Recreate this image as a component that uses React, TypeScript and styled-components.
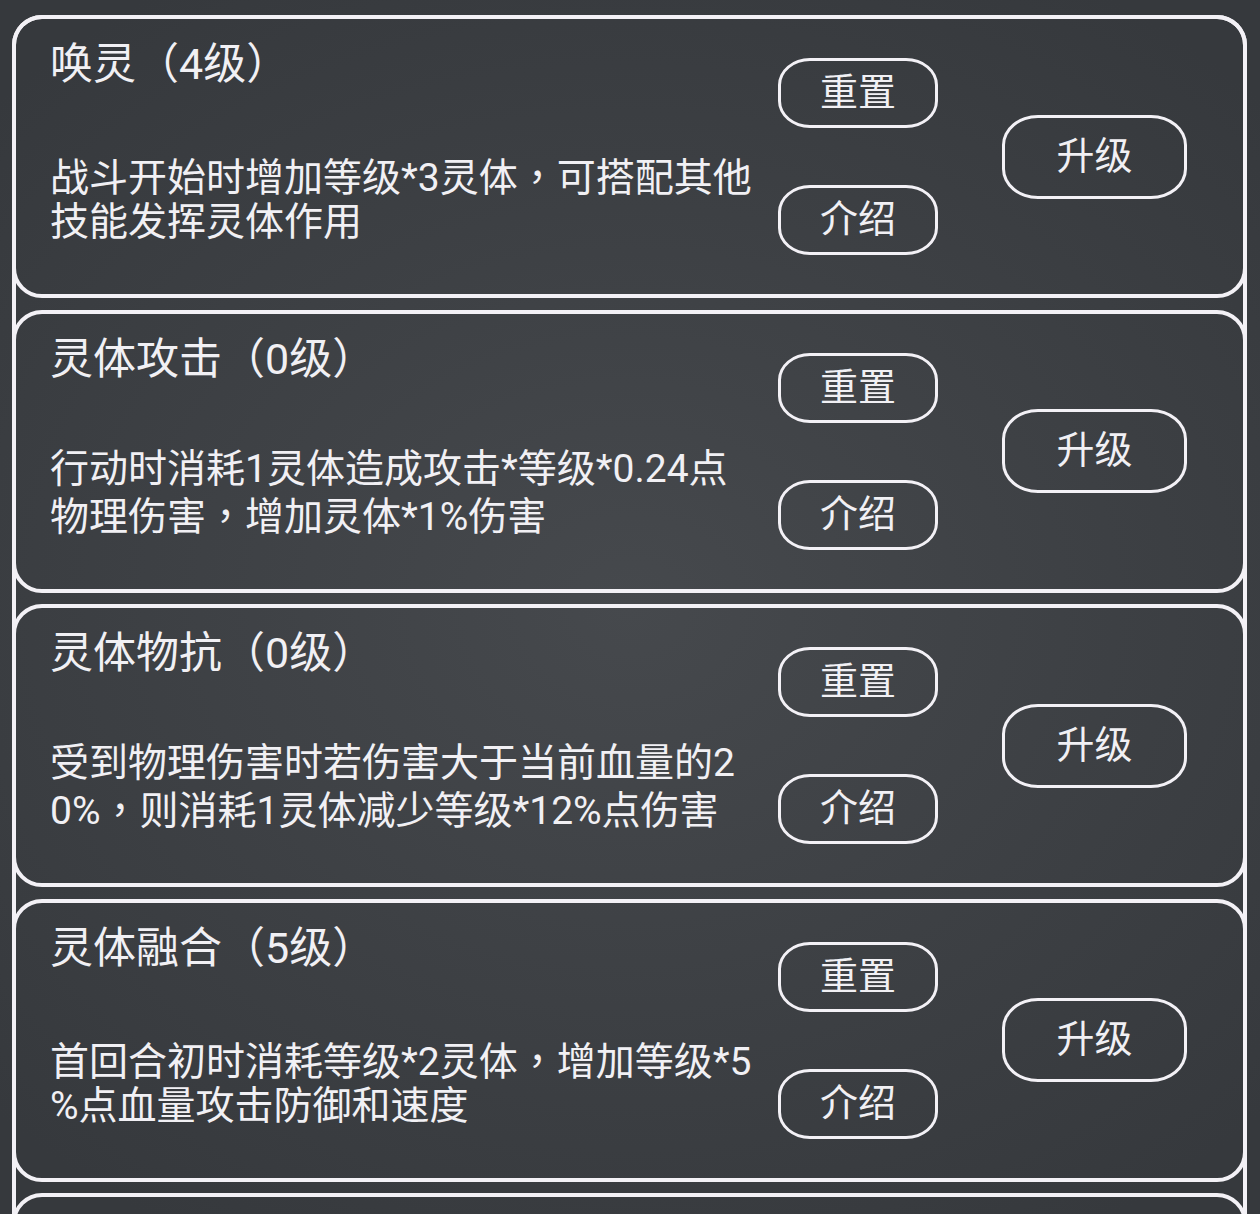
import React from "react";
import styled, { createGlobalStyle } from "styled-components";

const GlobalStyle = createGlobalStyle`
  html {
    background: radial-gradient(ellipse 70% 60% at 50% 50%, #46494d 0%, #3d4044 55%, #36393d 100%) fixed;
    background-color: #37393d;
  }
  body {
    margin: 0;
    font-family: Roboto, "Noto Sans CJK SC", sans-serif;
    color: #f1f0f4;
  }
`;

const Page = styled.div`
  padding: 15px 13px 0 12px;
`;

const List = styled.div`
  border: 4px solid #f3f1f6;
  border-bottom: none;
  border-radius: 30px 30px 0 0;
  display: flex;
  flex-direction: column;
  gap: 11.5px;
`;

const Card = styled.section`
  box-sizing: border-box;
  height: 283px;
  margin: 0 -4px;
  border: 4px solid #f3f1f6;
  border-radius: 30px;
  display: flex;
  align-items: center;
  padding: 0 0 0 34px;

  &:first-child {
    margin-top: -4px;
  }
`;

const Info = styled.div`
  width: 705px;
  align-self: stretch;
  display: flex;
  flex-direction: column;
  padding-top: 15px;
`;

const Title = styled.h2`
  margin: 0;
  font-size: 43px;
  font-weight: 400;
  line-height: 60px;
  white-space: nowrap;
`;

const Desc = styled.p`
  margin: 58px 0 0;
  font-size: 39px;
  font-weight: 400;
  line-height: 44px;
  word-break: break-all;
  line-break: anywhere;
`;

/* the device font centres its full-width comma */
const Comma = styled.span`
  font-family: "Noto Sans CJK TC", "Noto Sans CJK SC", sans-serif;
`;

const Stack = styled.div`
  margin-left: 23px;
  height: 197px;
  display: flex;
  flex-direction: column;
  justify-content: space-between;
`;

const Button = styled.button<{ $big?: boolean }>`
  box-sizing: border-box;
  width: ${(p) => (p.$big ? 185 : 160)}px;
  height: ${(p) => (p.$big ? 84 : 70)}px;
  margin-left: ${(p) => (p.$big ? 64 : 0)}px;
  border: 3px solid #f3f1f6;
  border-radius: ${(p) => (p.$big ? "36px / 30px" : "32px / 27px")};
  background: transparent;
  color: #f1f0f4;
  font-family: Roboto, "Noto Sans CJK SC", sans-serif;
  font-size: 38px;
  font-weight: 400;
  line-height: 1;
  padding: 0 0 2px;
  display: flex;
  align-items: center;
  justify-content: center;
  cursor: pointer;
`;

type Skill = { name: string; level: number; desc: string };

const skills: Skill[] = [
  { name: "唤灵", level: 4, desc: "战斗开始时增加等级*3灵体，可搭配其他技能发挥灵体作用" },
  { name: "灵体攻击", level: 0, desc: "行动时消耗1灵体造成攻击*等级*0.24点物理伤害，增加灵体*1%伤害" },
  { name: "灵体物抗", level: 0, desc: "受到物理伤害时若伤害大于当前血量的20%，则消耗1灵体减少等级*12%点伤害" },
  { name: "灵体融合", level: 5, desc: "首回合初时消耗等级*2灵体，增加等级*5%点血量攻击防御和速度" },
  { name: "灵体护盾", level: 0, desc: "受到法术伤害时消耗1灵体减少等级*10%点伤害" },
];

function renderDesc(text: string) {
  const parts = text.split("，");
  return parts.map((p, i) => (
    <React.Fragment key={i}>
      {p}
      {i < parts.length - 1 && <Comma>，</Comma>}
    </React.Fragment>
  ));
}

export default function App() {
  return (
    <>
      <GlobalStyle />
      <Page>
        <List>
          {skills.map((s) => (
            <Card key={s.name}>
              <Info>
                <Title>
                  {s.name}（{s.level}级）
                </Title>
                <Desc>{renderDesc(s.desc)}</Desc>
              </Info>
              <Stack>
                <Button>重置</Button>
                <Button>介绍</Button>
              </Stack>
              <Button $big>升级</Button>
            </Card>
          ))}
        </List>
      </Page>
    </>
  );
}
